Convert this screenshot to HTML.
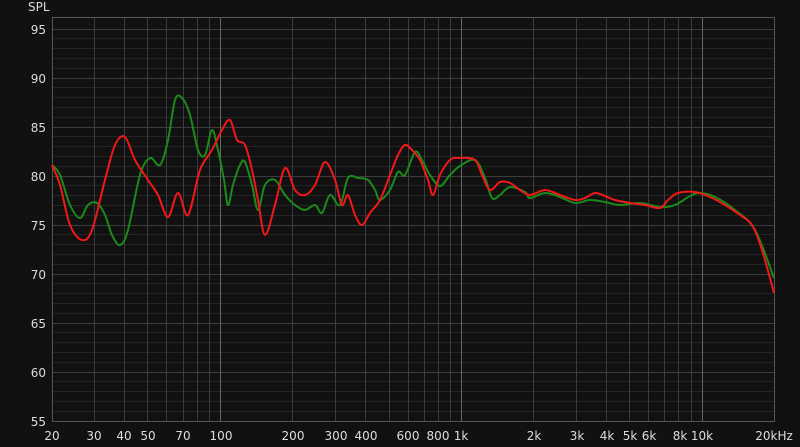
<!DOCTYPE html>
<html><head><meta charset="utf-8"><style>
html,body{margin:0;padding:0;background:#111;width:800px;height:447px;overflow:hidden}
svg text{font-family:"DejaVu Sans","Liberation Sans",sans-serif;font-size:12px;fill:#ddd}
</style></head><body>
<svg width="800" height="447" viewBox="0 0 800 447" xmlns="http://www.w3.org/2000/svg">
<rect width="800" height="447" fill="#111"/>
<g stroke="#242424" stroke-width="1">
<path d="M52 38.5H774M52 48.5H774M52 58.5H774M52 68.5H774M52 87.5H774M52 97.5H774M52 107.5H774M52 117.5H774M52 136.5H774M52 146.5H774M52 156.5H774M52 166.5H774M52 185.5H774M52 195.5H774M52 205.5H774M52 215.5H774M52 234.5H774M52 244.5H774M52 254.5H774M52 264.5H774M52 283.5H774M52 293.5H774M52 303.5H774M52 313.5H774M52 332.5H774M52 342.5H774M52 352.5H774M52 362.5H774M52 381.5H774M52 391.5H774M52 401.5H774M52 411.5H774"/>
</g>
<g stroke="#3c3c3c" stroke-width="1">
<path d="M52 29.5H774M52 78.5H774M52 127.5H774M52 176.5H774M52 225.5H774M52 274.5H774M52 323.5H774M52 372.5H774"/>
<path d="M94.5 18V421M124.5 18V421M147.5 18V421M166.5 18V421M183.5 18V421M197.5 18V421M209.5 18V421M292.5 18V421M335.5 18V421M365.5 18V421M389.5 18V421M408.5 18V421M424.5 18V421M438.5 18V421M450.5 18V421M533.5 18V421M576.5 18V421M606.5 18V421M629.5 18V421M648.5 18V421M664.5 18V421M678.5 18V421M691.5 18V421"/>
</g>
<g stroke="#666" stroke-width="1">
<path d="M220.5 18V421M461.5 18V421M702.5 18V421"/>
</g>
<rect x="52.5" y="17.5" width="722" height="404" fill="none" stroke="#555"/>
<path id="g" fill="none" stroke="#1a8a1a" stroke-width="2" stroke-linejoin="round" d=""/>
<path id="r" fill="none" stroke="#f01818" stroke-width="2" stroke-linejoin="round" d=""/>
<text x="28" y="11">SPL</text>
<g text-anchor="end">
<text x="46" y="34">95</text><text x="46" y="83">90</text><text x="46" y="132">85</text><text x="46" y="181">80</text><text x="46" y="230">75</text><text x="46" y="279">70</text><text x="46" y="328">65</text><text x="46" y="377">60</text><text x="46" y="426">55</text>
</g>
<g text-anchor="middle">
<text x="52" y="440">20</text><text x="94" y="440">30</text><text x="124" y="440">40</text><text x="148" y="440">50</text><text x="183" y="440">70</text><text x="221" y="440">100</text><text x="293" y="440">200</text><text x="336" y="440">300</text><text x="366" y="440">400</text><text x="408" y="440">600</text><text x="438" y="440">800</text><text x="461" y="440">1k</text><text x="534" y="440">2k</text><text x="577" y="440">3k</text><text x="607" y="440">4k</text><text x="630" y="440">5k</text><text x="649" y="440">6k</text><text x="680" y="440">8k</text><text x="702" y="440">10k</text><text x="774" y="440">20kHz</text>
</g>
</svg>
<script>
function sm(s){var a=s.trim().split(/\s+/).map(function(p){return p.split(',').map(Number)});var d='M'+a[0][0]+' '+a[0][1];
for(var i=0;i<a.length-1;i++){var p0=a[i-1]||a[i],p1=a[i],p2=a[i+1],p3=a[i+2]||p2;
d+=' C'+(p1[0]+(p2[0]-p0[0])/6)+' '+(p1[1]+(p2[1]-p0[1])/6)+' '+(p2[0]-(p3[0]-p1[0])/6)+' '+(p2[1]-(p3[1]-p1[1])/6)+' '+p2[0]+' '+p2[1];}return d;}
document.getElementById('g').setAttribute('d',sm("52,165 60,175 70,205 80,218 88,205 97,203 105,215 112,235 120,245 128,230 140,175 150,158 160,165 168,140 175,100 182,98 190,115 198,150 205,155 212,130 218,150 224,180 228,205 233,185 240,165 245,162 252,185 258,210 265,185 275,180 285,195 295,205 305,210 315,205 322,213 330,195 340,205 348,178 358,178 368,180 375,190 380,200 390,190 398,172 405,175 415,152 422,160 430,175 440,186 450,175 460,166 475,160 485,178 492,198 500,195 510,187 525,192 530,198 545,193 560,197 575,203 590,200 605,202 620,205 640,203 660,207 675,205 690,196 700,193 715,197 735,210 755,230 774,278"));
document.getElementById('r').setAttribute('d',sm("52,165 60,185 70,225 82,240 92,230 105,180 115,145 125,137 135,160 148,180 158,195 168,217 178,193 188,215 200,170 212,150 222,130 230,120 237,140 245,145 252,170 258,200 265,235 275,205 285,168 295,190 305,195 315,185 325,162 335,180 342,205 348,195 355,215 362,225 370,213 380,200 390,175 398,155 405,145 412,150 420,160 428,180 433,195 440,175 450,160 460,158 475,160 482,175 490,190 500,182 510,183 520,190 530,195 545,190 560,195 575,200 585,198 595,193 605,196 615,200 630,203 645,205 660,208 668,200 678,193 695,192 710,197 725,205 740,215 752,225 762,250 774,293"));
</script>
</body></html>
